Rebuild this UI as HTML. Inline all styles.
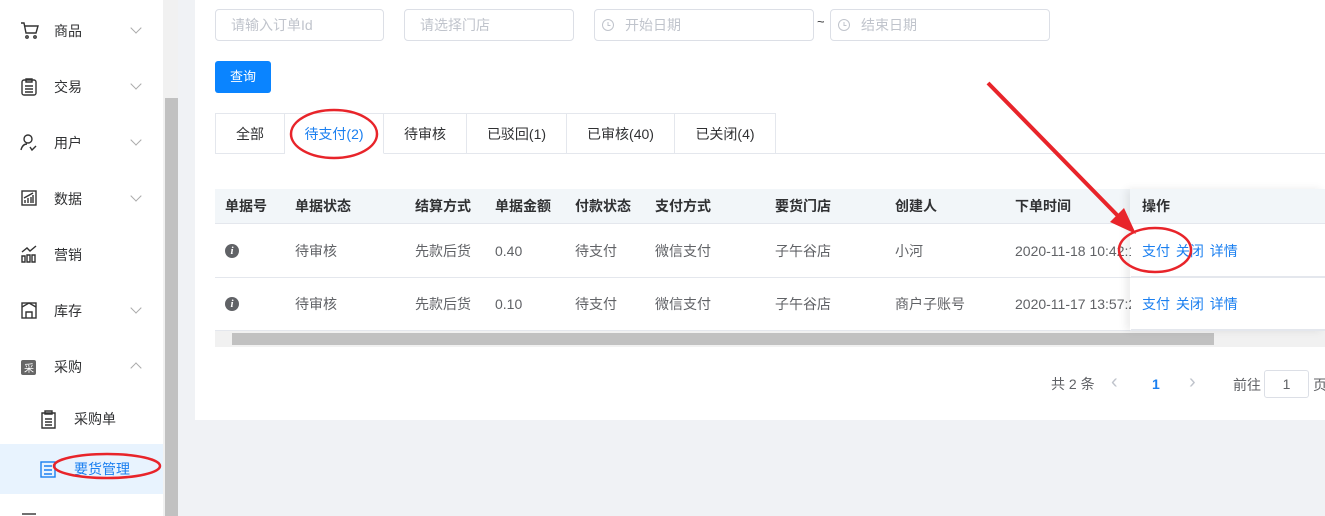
<!DOCTYPE html>
<html><head><meta charset="utf-8"><style>
*{box-sizing:border-box;margin:0;padding:0}
body{width:1325px;height:516px;overflow:hidden;background:#f0f2f5;font-family:"Liberation Sans","Noto Sans CJK SC",sans-serif;font-size:14px;color:#303133;position:relative}
.abs{position:absolute}
.side{left:0;top:0;width:163px;height:516px;background:#fff}
.sb{left:163px;top:0;width:15px;height:516px;background:#f1f1f1}
.thumb{left:165px;top:98px;width:13px;height:418px;background:#c1c1c1}
.mi{position:absolute;left:54px;font-size:14px;color:#303133;line-height:20px}
.chev{position:absolute;left:132px;width:8px;height:8px;border-right:1px solid #aaa;border-bottom:1px solid #aaa;transform:rotate(45deg)}
.card{left:195px;top:0;width:1130px;height:420px;background:#fff}
.inp{position:absolute;top:9px;height:32px;border:1px solid #dcdfe6;border-radius:4px;color:#c0c4cc;font-size:14px;line-height:30px;padding-left:15px}
.btn{left:215px;top:61px;width:56px;height:32px;background:#0a84ff;border-radius:3px;color:#fff;font-size:13px;line-height:32px;text-align:center}
.tab{position:absolute;top:113px;height:41px;border:1px solid #e4e7ed;border-left:none;background:#fff;line-height:40px;text-align:center;font-size:14px;color:#303133}
.th,.td{position:absolute;font-size:14px;line-height:20px;white-space:nowrap}
.th{font-weight:bold;color:#303133;top:196px}
.td{color:#606266}
.lk{color:#1a7ff0;word-spacing:2px}
.info{position:absolute;left:225px;width:14px;height:14px;border-radius:50%;background:#606266;color:#fff;font:italic bold 11px "Liberation Serif",serif;text-align:center;line-height:14px}
</style></head><body>
<div class="abs side"></div>
<div class="abs sb"></div><div class="abs thumb"></div>
<div class="abs" style="left:0;top:444px;width:163px;height:50px;background:#e8f3fe"></div>

<svg class="abs" style="left:0;top:0" width="163" height="516" fill="none" stroke="#333" stroke-width="1.4">
<path d="M21 23h3l2 10h10l2-7H25"/><circle cx="27" cy="37" r="1.2"/><circle cx="35" cy="37" r="1.2"/>
<rect x="22" y="80" width="14" height="15" rx="2"/><path d="M26 79h6v3h-6zM25 86h8M25 89h8M25 92h8"/>
<circle cx="28" cy="139" r="4"/><path d="M21 150c1-4 3-6 6-6M30 147l2 3 4-4"/>
<rect x="22" y="191" width="14" height="14"/><path d="M25 203v-3M28 203v-5M31 203v-6M33 203v-8M24 198l9-5"/>
<path d="M22 262v-6h3v6zM27 262v-7h3v7zM32 262v-7h3v7zM22 252l5-4 3 3 6-5"/>
<rect x="22" y="303" width="14" height="15"/><path d="M22 307l7-4 7 4M26 318v-6h6v6"/>
<rect x="21" y="360" width="15" height="15" rx="2" fill="#666" stroke="none"/>
<path d="M42 413h13v15H42zM45 411h7v3h-7zM45 419h7M45 422h7M45 425h7"/>
<g stroke="#1a7ff0"><rect x="41" y="462" width="14" height="15"/><path d="M44 466h8M44 470h8M44 474h8"/></g>
<path d="M22 514h14"/>
</svg>
<div class="abs" style="left:24px;top:360px;color:#fff;font-size:10px">采</div>
<div class="mi" style="top:21px">商品</div><div class="chev" style="top:24px"></div>
<div class="mi" style="top:77px">交易</div><div class="chev" style="top:80px"></div>
<div class="mi" style="top:133px">用户</div><div class="chev" style="top:136px"></div>
<div class="mi" style="top:189px">数据</div><div class="chev" style="top:192px"></div>
<div class="mi" style="top:245px">营销</div>
<div class="mi" style="top:301px">库存</div><div class="chev" style="top:304px"></div>
<div class="mi" style="top:357px">采购</div><div class="chev" style="top:364px;transform:rotate(225deg)"></div>
<div class="mi" style="top:409px;left:74px">采购单</div>
<div class="mi" style="top:459px;left:74px;color:#1a7ff0">要货管理</div>

<div class="abs card"></div>
<div class="inp" style="left:215px;width:169px">请输入订单Id</div>
<div class="inp" style="left:404px;width:170px">请选择门店</div>
<div class="inp" style="left:594px;width:220px;padding-left:30px">开始日期</div>
<div class="abs" style="left:817px;top:14px;font-size:13px">~</div>
<div class="inp" style="left:830px;width:220px;padding-left:30px">结束日期</div>
<svg class="abs" style="left:600px;top:17px" width="16" height="16" fill="none" stroke="#c0c4cc"><circle cx="8" cy="8" r="5.5"/><path d="M8 5v3.5h2.5"/></svg>
<svg class="abs" style="left:836px;top:17px" width="16" height="16" fill="none" stroke="#c0c4cc"><circle cx="8" cy="8" r="5.5"/><path d="M8 5v3.5h2.5"/></svg>
<div class="abs btn">查询</div>

<div class="abs" style="left:215px;top:153px;width:1110px;height:1px;background:#e4e7ed"></div>
<div class="tab" style="left:215px;width:70px;border-left:1px solid #e4e7ed">全部</div>
<div class="tab" style="left:285px;width:99px;color:#1a7ff0;border-bottom-color:#fff">待支付(2)</div>
<div class="tab" style="left:384px;width:83px">待审核</div>
<div class="tab" style="left:467px;width:100px">已驳回(1)</div>
<div class="tab" style="left:567px;width:108px">已审核(40)</div>
<div class="tab" style="left:675px;width:101px">已关闭(4)</div>

<div class="abs" style="left:215px;top:189px;width:1110px;height:35px;background:#f2f6f9;border-bottom:1px solid #e4e7ed"></div>
<div class="abs" style="left:215px;top:277px;width:1110px;height:1px;background:#e4e7ed"></div>
<div class="abs" style="left:215px;top:330px;width:1110px;height:1px;background:#e4e7ed"></div>
<div class="abs" style="left:215px;top:331px;width:1110px;height:16px;background:#f1f1f1"></div>
<div class="abs" style="left:232px;top:333px;width:982px;height:12px;background:#c1c1c1"></div>

<div class="th" style="left:225px">单据号</div><div class="th" style="left:295px">单据状态</div><div class="th" style="left:415px">结算方式</div><div class="th" style="left:495px">单据金额</div><div class="th" style="left:575px">付款状态</div><div class="th" style="left:655px">支付方式</div><div class="th" style="left:775px">要货门店</div><div class="th" style="left:895px">创建人</div><div class="th" style="left:1015px">下单时间</div>

<div class="info" style="top:244px">i</div>
<div class="td" style="top:241px;left:295px">待审核</div><div class="td" style="top:241px;left:415px">先款后货</div><div class="td" style="top:241px;left:495px">0.40</div><div class="td" style="top:241px;left:575px">待支付</div><div class="td" style="top:241px;left:655px">微信支付</div><div class="td" style="top:241px;left:775px">子午谷店</div><div class="td" style="top:241px;left:895px">小河</div><div class="td" style="top:241px;left:1015px">2020-11-18 10:42:11</div>
<div class="info" style="top:297px">i</div>
<div class="td" style="top:294px;left:295px">待审核</div><div class="td" style="top:294px;left:415px">先款后货</div><div class="td" style="top:294px;left:495px">0.10</div><div class="td" style="top:294px;left:575px">待支付</div><div class="td" style="top:294px;left:655px">微信支付</div><div class="td" style="top:294px;left:775px">子午谷店</div><div class="td" style="top:294px;left:895px">商户子账号</div><div class="td" style="top:294px;left:1015px">2020-11-17 13:57:21</div>

<div class="abs" style="left:1130px;top:189px;width:195px;height:142px;box-shadow:-4px 0 8px rgba(0,0,0,.08)"></div>
<div class="abs" style="left:1131px;top:189px;width:194px;height:35px;background:#f2f6f9;border-bottom:1px solid #e4e7ed"></div>
<div class="abs" style="left:1131px;top:225px;width:194px;height:52px;background:#fff;border-bottom:1px solid #e4e7ed"></div>
<div class="abs" style="left:1131px;top:278px;width:194px;height:52px;background:#fff;border-bottom:1px solid #e4e7ed"></div>
<div class="th" style="left:1142px">操作</div>
<div class="td lk" style="top:241px;left:1142px">支付 关闭 详情</div>
<div class="td lk" style="top:294px;left:1142px">支付 关闭 详情</div>

<div class="td" style="top:374px;left:1051px">共 2 条</div>
<div class="td" style="top:372px;left:1111px;color:#c0c4cc;font-size:20px">‹</div>
<div class="td" style="top:374px;left:1152px;color:#1a7ff0;font-weight:bold">1</div>
<div class="td" style="top:372px;left:1189px;color:#c0c4cc;font-size:20px">›</div>
<div class="td" style="top:375px;left:1233px">前往</div>
<div class="abs" style="left:1264px;top:370px;width:45px;height:28px;border:1px solid #dcdfe6;border-radius:3px;text-align:center;line-height:26px;font-size:14px;color:#606266">1</div>
<div class="td" style="top:375px;left:1313px">页</div>

<svg class="abs" style="left:0;top:0" width="1325" height="516" fill="none" stroke="#e8242a" stroke-width="2.5">
<ellipse cx="334" cy="134" rx="43" ry="24"/>
<ellipse cx="107" cy="466" rx="53" ry="12"/>
<ellipse cx="1155" cy="250" rx="36" ry="22"/>
<path d="M988 83L1120 218" stroke-width="4"/>
<path d="M1110 222l26 12-12-26z" fill="#e8242a" stroke="none"/>
</svg>
</body></html>
